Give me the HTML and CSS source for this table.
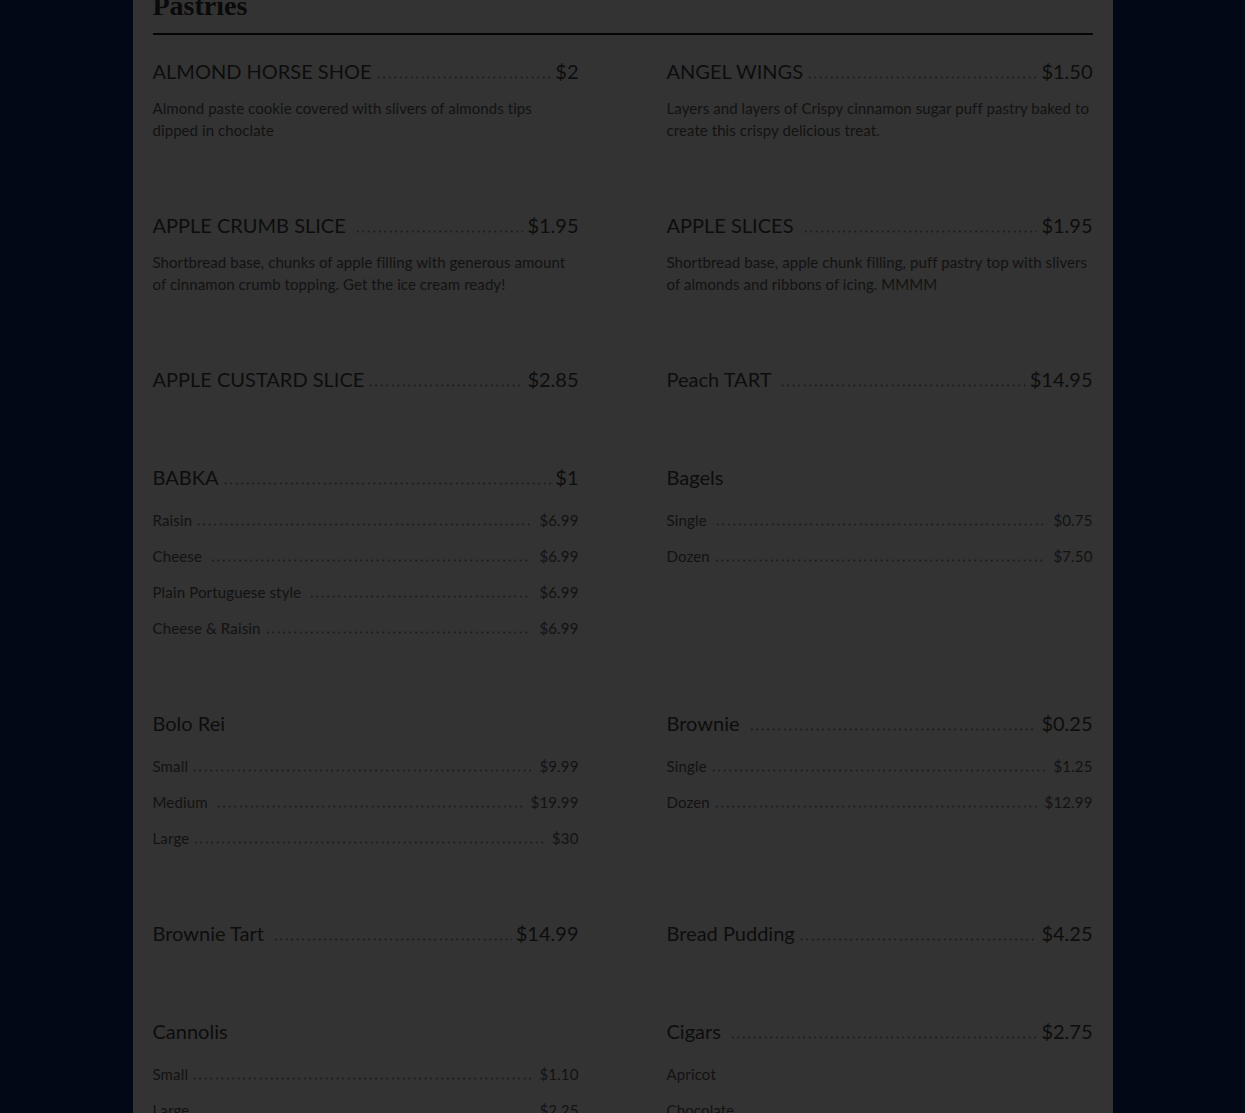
FILE: index.html
```html
<!DOCTYPE html>
<html lang="en">
<head>
<meta charset="utf-8">
<title>Pastries</title>
<link rel="stylesheet" href="styles.css">
</head>
<body>
<div class="page">
  <h1 class="title">Pastries</h1>
  <div class="menu">
    <div class="item">
      <div class="head"><span class="name">ALMOND HORSE SHOE</span><span class="dots"></span><span class="price">$2</span></div>
      <p class="desc">Almond paste cookie covered with slivers of almonds tips dipped in choclate</p>
    </div>
    <div class="item">
      <div class="head"><span class="name">ANGEL WINGS</span><span class="dots"></span><span class="price">$1.50</span></div>
      <p class="desc">Layers and layers of Crispy cinnamon sugar puff pastry baked to create this crispy delicious treat.</p>
    </div>

    <div class="item">
      <div class="head"><span class="name">APPLE CRUMB SLICE&nbsp;</span><span class="dots"></span><span class="price">$1.95</span></div>
      <p class="desc">Shortbread base, chunks of apple filling with generous amount of cinnamon crumb topping. Get the ice cream ready!</p>
    </div>
    <div class="item">
      <div class="head"><span class="name">APPLE SLICES&nbsp;</span><span class="dots"></span><span class="price">$1.95</span></div>
      <p class="desc">Shortbread base, apple chunk filling, puff pastry top with slivers of almonds and ribbons of icing. MMMM</p>
    </div>

    <div class="item">
      <div class="head"><span class="name">APPLE CUSTARD SLICE</span><span class="dots"></span><span class="price">$2.85</span></div>
    </div>
    <div class="item">
      <div class="head"><span class="name">Peach TART&nbsp;</span><span class="dots"></span><span class="price">$14.95</span></div>
    </div>

    <div class="item">
      <div class="head"><span class="name">BABKA</span><span class="dots"></span><span class="price">$1</span></div>
      <ul class="subs">
        <li><span class="name">Raisin</span><span class="dots"></span><span class="price">$6.99</span></li>
        <li><span class="name">Cheese&nbsp;</span><span class="dots"></span><span class="price">$6.99</span></li>
        <li><span class="name">Plain Portuguese style&nbsp;</span><span class="dots"></span><span class="price">$6.99</span></li>
        <li><span class="name">Cheese &amp; Raisin</span><span class="dots"></span><span class="price">$6.99</span></li>
      </ul>
    </div>
    <div class="item">
      <div class="head"><span class="name">Bagels</span></div>
      <ul class="subs">
        <li><span class="name">Single&nbsp;</span><span class="dots"></span><span class="price">$0.75</span></li>
        <li><span class="name">Dozen</span><span class="dots"></span><span class="price">$7.50</span></li>
      </ul>
    </div>

    <div class="item">
      <div class="head"><span class="name">Bolo Rei</span></div>
      <ul class="subs">
        <li><span class="name">Small</span><span class="dots"></span><span class="price">$9.99</span></li>
        <li><span class="name">Medium&nbsp;</span><span class="dots"></span><span class="price">$19.99</span></li>
        <li><span class="name">Large</span><span class="dots"></span><span class="price">$30</span></li>
      </ul>
    </div>
    <div class="item">
      <div class="head"><span class="name">Brownie&nbsp;</span><span class="dots"></span><span class="price">$0.25</span></div>
      <ul class="subs">
        <li><span class="name">Single</span><span class="dots"></span><span class="price">$1.25</span></li>
        <li><span class="name">Dozen</span><span class="dots"></span><span class="price">$12.99</span></li>
      </ul>
    </div>

    <div class="item">
      <div class="head"><span class="name">Brownie Tart&nbsp;</span><span class="dots"></span><span class="price">$14.99</span></div>
    </div>
    <div class="item">
      <div class="head"><span class="name">Bread Pudding</span><span class="dots"></span><span class="price">$4.25</span></div>
    </div>

    <div class="item">
      <div class="head"><span class="name">Cannolis</span></div>
      <ul class="subs">
        <li><span class="name">Small</span><span class="dots"></span><span class="price">$1.10</span></li>
        <li><span class="name">Large</span><span class="dots"></span><span class="price">$2.25</span></li>
      </ul>
    </div>
    <div class="item">
      <div class="head"><span class="name">Cigars&nbsp;</span><span class="dots"></span><span class="price">$2.75</span></div>
      <ul class="subs">
        <li><span class="name">Apricot</span></li>
        <li><span class="name">Chocolate</span></li>
        <li><span class="name">Vanilla</span></li>
      </ul>
    </div>
  </div>
</div>
</body>
</html>
```

FILE: styles.css
```css
html, body {
  margin: 0;
  padding: 0;
}
body {
  background: #020816;
  font-family: "Lato", "Liberation Sans", sans-serif;
  color: #0f0f0f;
}
.page {
  width: 940px;
  margin: 0 auto;
  padding: 0 20px 60px;
  background: #333333;
  min-height: 100vh;
}
.title {
  margin: -8px 0 0;
  padding-bottom: 13px;
  border-bottom: 2px solid #050505;
  font-family: "Liberation Serif", "DejaVu Serif", serif;
  font-weight: 700;
  font-size: 28px;
  line-height: 1;
  color: #0a0a0a;
}
.menu {
  padding-top: 21px;
  display: grid;
  grid-template-columns: 1fr 1fr;
  column-gap: 88px;
  row-gap: 68px;
  align-items: start;
}
.head {
  display: flex;
  align-items: baseline;
  font-size: 20px;
  font-weight: 400;
  line-height: 30px;
  color: #0d0d0d;
}
.name {
  white-space: pre;
}
.dots {
  flex: 1;
  height: 3px;
  margin: 0 4px;
  background-image: radial-gradient(circle, #1b1b1b 0.8px, transparent 1.3px);
  background-size: 5.5px 3px;
  background-repeat: repeat-x;
  background-position: left bottom;
}
.price {
  white-space: nowrap;
}
.desc {
  margin: 11px 0 1px;
  font-size: 15px;
  line-height: 22px;
  letter-spacing: 0.005em;
  color: #121212;
}
.subs {
  list-style: none;
  margin: 17px 0 1px;
  padding: 0;
  display: flex;
  flex-direction: column;
  gap: 14px;
}
.subs li {
  display: flex;
  align-items: baseline;
  font-size: 15px;
  line-height: 22px;
  letter-spacing: 0.01em;
  color: #121212;
}
.subs .dots {
  margin: 0 8px 0 4px;
}
```
